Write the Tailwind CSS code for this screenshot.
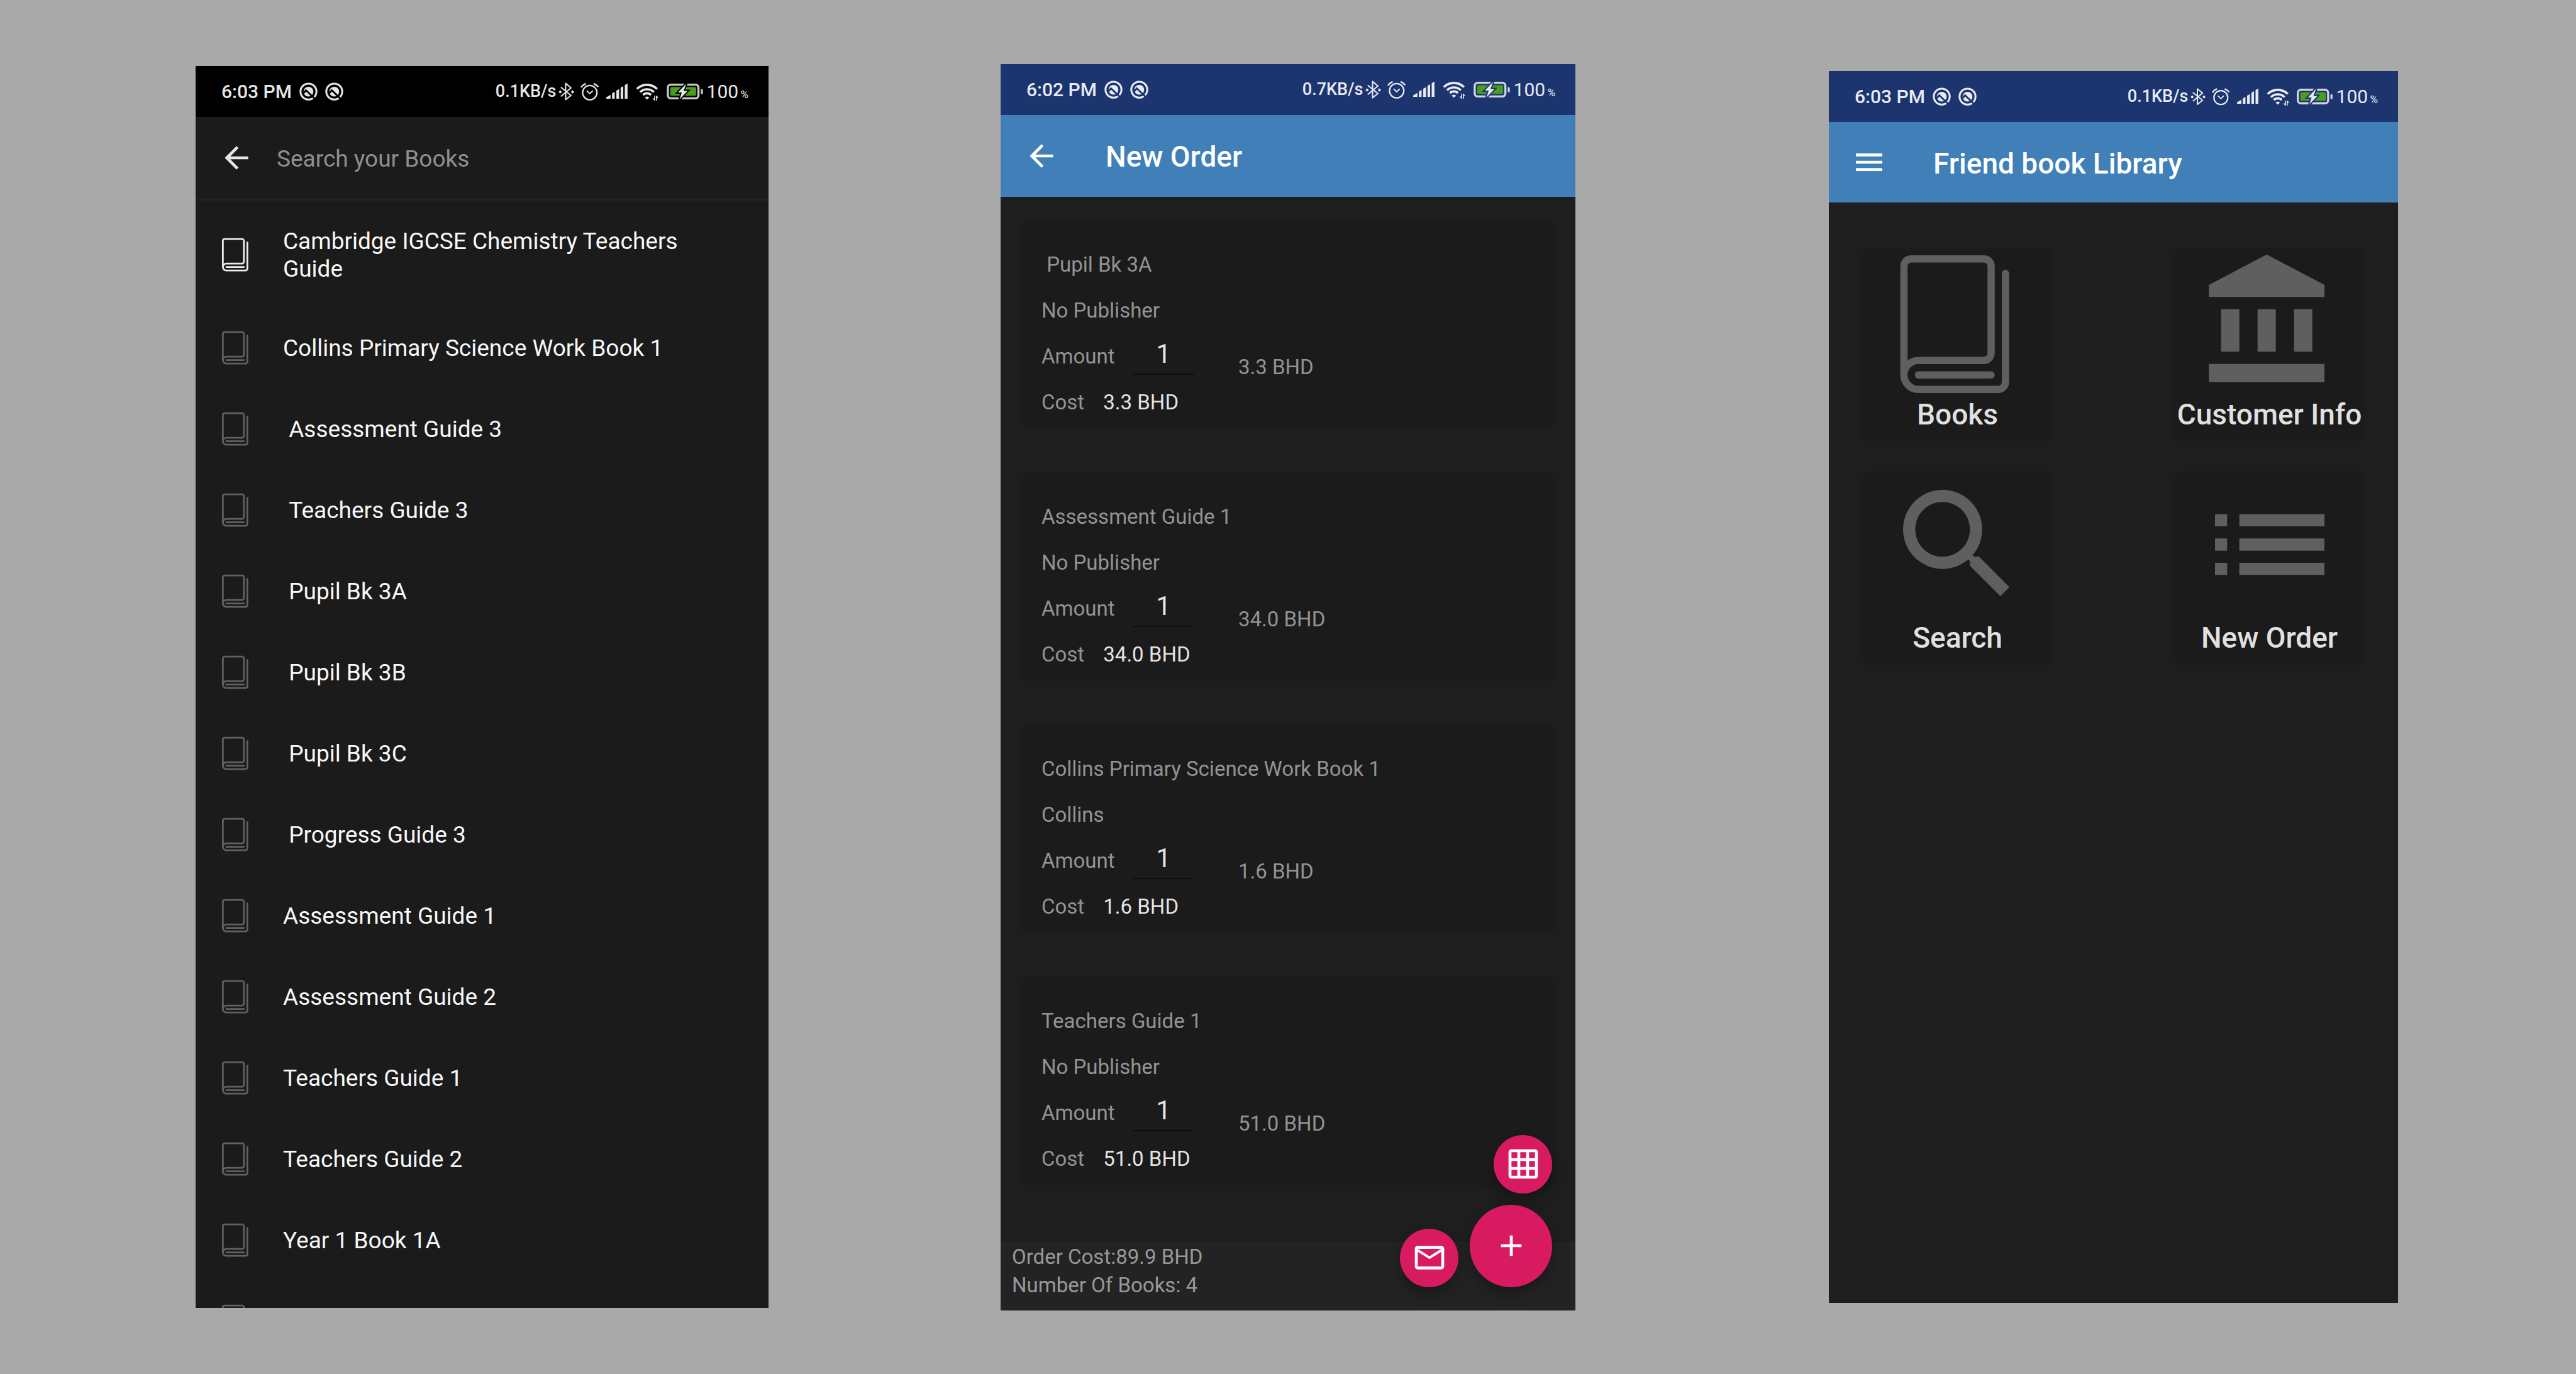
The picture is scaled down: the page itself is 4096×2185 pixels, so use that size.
<!DOCTYPE html>
<html lang="en">
<head>
<meta charset="utf-8">
<meta name="viewport" content="width=device-width, initial-scale=1">
<title>Friend book Library</title>
<script src="https://cdn.jsdelivr.net/npm/@tailwindcss/browser@4"></script>
</head>
<body class="bg-[#a9a9a9] font-['Roboto',sans-serif]">

<!-- Shared icon shapes -->
<svg class="absolute size-0" aria-hidden="true">
  <symbol id="i-assist" viewBox="710 46 152 153">
    <mask id="m-assist" maskUnits="userSpaceOnUse" x="700" y="36" width="180" height="180">
      <rect x="700" y="36" width="180" height="180" fill="#fff"/>
      <path d="M740 142L765 112L850 194" fill="none" stroke="#000" stroke-width="15"/>
    </mask>
    <g mask="url(#m-assist)">
      <circle cx="786" cy="123" r="67" fill="none" stroke="currentColor" stroke-width="16"/>
      <circle cx="786" cy="124" r="41" fill="currentColor"/>
    </g>
  </symbol>
  <symbol id="i-bt" viewBox="62 32 133 153">
    <path d="M86 75L168 142L123 178V40L168 78L86 147" fill="none" stroke="currentColor" stroke-width="11" stroke-linejoin="round" stroke-linecap="round"/>
    <path d="M77 98l14 14-14 14-14-14zM181 98l14 14-14 14-14-14z" fill="currentColor"/>
  </symbol>
  <symbol id="i-alarm" viewBox="245 32 155 153">
    <g fill="none" stroke="currentColor">
      <circle cx="324" cy="118" r="61" stroke-width="12"/>
      <path d="M298 102L324 127L350 102" stroke-width="10"/>
      <path d="M251 74Q262 54 290 41M358 41Q384 54 396 70" stroke-width="13"/>
    </g>
  </symbol>
  <symbol id="i-signal" viewBox="462 32 180 153">
    <path fill="currentColor" d="M462 170V158L498 136V170ZM511 170V124L533 111V170ZM547 170V101L570 88V170ZM583 170V77L605 64V170ZM618 170V54L641 41V170Z"/>
  </symbol>
  <symbol id="i-wifi" viewBox="710 32 192 153">
    <path d="M720 87A120 120 0 0 1 890 87M747 114A82 82 0 0 1 863 114M771 138A48 48 0 0 1 839 138" fill="none" stroke="currentColor" stroke-width="19"/>
    <path fill="currentColor" d="M786 160Q805 141 824 160L805 177ZM866 143h8v42h-8L852 167h14zM881 187v-42h8l13 18h-13v24z"/>
  </symbol>
  <symbol id="i-battery" viewBox="70 32 304 153">
    <mask id="m-bolt" maskUnits="userSpaceOnUse" x="60" y="20" width="330" height="180">
      <rect x="60" y="20" width="330" height="180" fill="#fff"/>
      <path d="M234 42L164 116H196L178 174L244 104H211Z" fill="#000" stroke="#000" stroke-width="22"/>
    </mask>
    <g mask="url(#m-bolt)">
      <rect x="79" y="51" width="257" height="115" rx="26" fill="none" stroke="currentColor" stroke-opacity=".88" stroke-width="18"/>
      <rect x="100" y="72" width="216" height="72" rx="10" fill="#4a9f1a"/>
    </g>
    <rect x="356" y="88" width="17" height="43" rx="8" fill="currentColor" fill-opacity=".88"/>
    <path d="M234 42L164 116H196L178 174L244 104H211Z" fill="currentColor"/>
  </symbol>
  <symbol id="i-book" viewBox="0 0 232 232">
    <g fill="none" stroke="currentColor" stroke-width="11.5" stroke-linecap="round">
      <path d="M191.8 39.7V212.8A11.5 11.5 0 0 1 180.3 224.3H53.4A23 23 0 0 1 30.4 201.3V28.3A11.5 11.5 0 0 1 41.9 16.8H157.5A11.5 11.5 0 0 1 169 28.3V166.7A11.5 11.5 0 0 1 157.5 178.2H53.4A23 23 0 0 0 30.4 201.3"/>
      <path d="M53.4 201.3H169"/>
    </g>
  </symbol>
  <symbol id="i-back" viewBox="0 0 24 24"><path fill="currentColor" d="M20 11H7.83l5.59-5.59L12 4l-8 8 8 8 1.41-1.41L7.83 13H20v-2z"/></symbol>
  <symbol id="i-menu" viewBox="0 0 24 24"><path fill="currentColor" d="M3 18h18v-2H3v2zm0-5h18v-2H3v2zm0-7v2h18V6H3z"/></symbol>
  <symbol id="i-bank" viewBox="0 0 24 24"><path fill="currentColor" d="M4 10v7h3v-7H4zm6 0v7h3v-7h-3zM2 22h19v-3H2v3zm14-12v7h3v-7h-3zm-4.500-9L2 6v2h19V6l-9.500-5z"/></symbol>
  <symbol id="i-search" viewBox="0 0 24 24"><path fill="currentColor" d="M15.500 14h-.79l-.28-.27A6.471 6.471 0 0 0 16 9.500 6.500 6.500 0 1 0 9.500 16c1.610 0 3.090-.59 4.230-1.570l.27.28v.79l5 4.990L20.490 19l-4.990-5zm-6 0C7.010 14 5 11.990 5 9.500S7.010 5 9.500 5 14 7.010 14 9.500 11.990 14 9.500 14z"/></symbol>
  <symbol id="i-list" viewBox="0 0 24 24"><path fill="currentColor" d="M3 13h2v-2H3v2zm0 4h2v-2H3v2zm0-8h2V7H3v2zm4 4h14v-2H7v2zm0 4h14v-2H7v2zM7 7v2h14V7H7z"/></symbol>
  <symbol id="i-grid" viewBox="0 0 24 24"><path fill="currentColor" d="M20 2H4c-1.100 0-2 .9-2 2v16c0 1.100.9 2 2 2h16c1.100 0 2-.9 2-2V4c0-1.100-.9-2-2-2zM8 20H4v-4h4v4zm0-6H4v-4h4v4zm0-6H4V4h4v4zm6 12h-4v-4h4v4zm0-6h-4v-4h4v4zm0-6h-4V4h4v4zm6 12h-4v-4h4v4zm0-6h-4v-4h4v4zm0-6h-4V4h4v4z"/></symbol>
  <symbol id="i-mail" viewBox="0 0 24 24"><path fill="currentColor" d="M22 6c0-1.100-.9-2-2-2H4c-1.100 0-2 .9-2 2v12c0 1.100.9 2 2 2h16c1.100 0 2-.9 2-2V6zm-2 0l-8 5-8-5h16zm0 12H4V8l8 5 8-5v10z"/></symbol>
  <symbol id="i-plus" viewBox="0 0 24 24"><path fill="currentColor" d="M19 13h-6v6h-2v-6H5v-2h6V5h2v6h6v2z"/></symbol>
</svg>

<main class="grid min-h-screen grid-cols-[311fr_911fr_369fr_914fr_403fr_905fr_283fr] items-center">

  <!-- Book search -->
  <section class="col-start-2 flex aspect-[911/1975] flex-col overflow-hidden bg-[#1b1b1b]">
    <div class="flex h-[81px] shrink-0 items-center justify-between bg-black pr-8 pl-[41px] text-[#e6e6e6]">
      <div class="flex items-center gap-3">
        <span class="text-[30px] font-medium">6:03 PM</span>
        <svg class="size-[29px]"><use href="#i-assist"/></svg>
        <svg class="size-[29px]"><use href="#i-assist"/></svg>
      </div>
      <div class="flex items-center">
        <span class="mr-[3px] text-[27px] font-medium">0.1KB/s</span>
        <svg class="mr-[10px] h-[29px] w-[25px]"><use href="#i-bt"/></svg>
        <svg class="mr-3 size-[29px]"><use href="#i-alarm"/></svg>
        <svg class="mr-[13px] h-[29px] w-[34px]"><use href="#i-signal"/></svg>
        <svg class="mr-[13px] h-[29px] w-9"><use href="#i-wifi"/></svg>
        <svg class="mr-[6px] h-[29px] w-[58px]"><use href="#i-battery"/></svg>
        <span class="text-[30px]">100 <span class="-ml-1 text-[17px]">%</span></span>
      </div>
    </div>
    <header class="flex h-[133px] shrink-0 items-center gap-9 border-b-[3px] border-[#232323] pr-9 pl-[37px]">
      <button type="button" aria-label="Back" class="text-[#e6e6e6]"><svg class="size-14"><use href="#i-back"/></svg></button>
      <input type="search" aria-label="Search your Books" placeholder="Search your Books" class="min-w-0 flex-1 bg-transparent pt-1 text-[37px] text-white outline-none placeholder:text-[#8f8f8f]">
    </header>
    <ul class="text-[37px] leading-[44px] text-[#f7f7f7] [&>li]:flex [&>li]:h-[129px] [&>li]:items-center [&>li]:gap-[47px] [&>li]:pr-16 [&>li]:pl-9 [&>li]:whitespace-pre-wrap [&_svg]:mb-1 [&_svg]:size-14 [&_svg]:shrink-0 [&_svg]:text-[#616161]">
      <li class="!h-[170px] pt-1"><svg class="!text-[#ececec]"><use href="#i-book"/></svg><span>Cambridge IGCSE Chemistry Teachers Guide</span></li>
      <li><svg><use href="#i-book"/></svg><span>Collins Primary Science Work Book 1</span></li>
      <li><svg><use href="#i-book"/></svg><span> Assessment Guide 3</span></li>
      <li><svg><use href="#i-book"/></svg><span> Teachers Guide 3</span></li>
      <li><svg><use href="#i-book"/></svg><span> Pupil Bk 3A</span></li>
      <li><svg><use href="#i-book"/></svg><span> Pupil Bk 3B</span></li>
      <li><svg><use href="#i-book"/></svg><span> Pupil Bk 3C</span></li>
      <li><svg><use href="#i-book"/></svg><span> Progress Guide 3</span></li>
      <li><svg><use href="#i-book"/></svg><span>Assessment Guide 1</span></li>
      <li><svg><use href="#i-book"/></svg><span>Assessment Guide 2</span></li>
      <li><svg><use href="#i-book"/></svg><span>Teachers Guide 1</span></li>
      <li><svg><use href="#i-book"/></svg><span>Teachers Guide 2</span></li>
      <li><svg><use href="#i-book"/></svg><span>Year 1 Book 1A</span></li>
      <li><svg><use href="#i-book"/></svg></li>
    </ul>
  </section>

  <!-- New order -->
  <section class="relative col-start-4 flex aspect-[914/1982] flex-col overflow-hidden bg-[#1e1e1e]">
    <div class="flex h-[81px] shrink-0 items-center justify-between bg-[#1c356f] pr-8 pl-[41px] text-[#e8ebf4]">
      <div class="flex items-center gap-3">
        <span class="text-[30px] font-medium">6:02 PM</span>
        <svg class="size-[29px]"><use href="#i-assist"/></svg>
        <svg class="size-[29px]"><use href="#i-assist"/></svg>
      </div>
      <div class="flex items-center">
        <span class="mr-[3px] text-[27px] font-medium">0.7KB/s</span>
        <svg class="mr-[10px] h-[29px] w-[25px]"><use href="#i-bt"/></svg>
        <svg class="mr-3 size-[29px]"><use href="#i-alarm"/></svg>
        <svg class="mr-[13px] h-[29px] w-[34px]"><use href="#i-signal"/></svg>
        <svg class="mr-[13px] h-[29px] w-9"><use href="#i-wifi"/></svg>
        <svg class="mr-[6px] h-[29px] w-[58px]"><use href="#i-battery"/></svg>
        <span class="text-[30px]">100 <span class="-ml-1 text-[17px]">%</span></span>
      </div>
    </div>
    <header class="flex h-[130px] shrink-0 items-center gap-[74px] bg-[#417fb8] px-[37px] text-white">
      <button type="button" aria-label="Back"><svg class="size-14"><use href="#i-back"/></svg></button>
      <h1 class="pt-1 text-[46px] font-medium">New Order</h1>
    </header>
    <div class="flex min-h-0 flex-1 flex-col gap-[74px] overflow-hidden px-9 pt-[37px] text-[33px] leading-[73px] text-[#939393] [&>article]:rounded-[9px] [&>article]:bg-[#1b1b1b] [&>article]:px-[29px] [&>article]:pt-[34px] [&>article]:pb-px [&>article]:shadow-[0_4px_8px_rgba(0,0,0,0.12)] [&_h2]:whitespace-pre [&_input]:mb-[7px] [&_input]:h-16 [&_input]:w-[98px] [&_input]:border-b-2 [&_input]:border-[#0e0e0e] [&_input]:bg-transparent [&_input]:text-center [&_input]:text-[42px] [&_input]:leading-[62px] [&_input]:text-[#e4e4e4] [&_label]:w-[145px] [&_output]:ml-[70px] [&_output]:leading-[38px]">
      <article>
        <h2> Pupil Bk 3A</h2>
        <p>No Publisher</p>
        <div class="flex items-end"><label for="amount-1">Amount</label><input id="amount-1" value="1"><output for="amount-1">3.3 BHD</output></div>
        <p>Cost <span class="ml-[22px] text-[#e4e4e4]">3.3 BHD</span></p>
      </article>
      <article>
        <h2>Assessment Guide 1</h2>
        <p>No Publisher</p>
        <div class="flex items-end"><label for="amount-2">Amount</label><input id="amount-2" value="1"><output for="amount-2">34.0 BHD</output></div>
        <p>Cost <span class="ml-[22px] text-[#e4e4e4]">34.0 BHD</span></p>
      </article>
      <article>
        <h2>Collins Primary Science Work Book 1</h2>
        <p>Collins</p>
        <div class="flex items-end"><label for="amount-3">Amount</label><input id="amount-3" value="1"><output for="amount-3">1.6 BHD</output></div>
        <p>Cost <span class="ml-[22px] text-[#e4e4e4]">1.6 BHD</span></p>
      </article>
      <article>
        <h2>Teachers Guide 1</h2>
        <p>No Publisher</p>
        <div class="flex items-end"><label for="amount-4">Amount</label><input id="amount-4" value="1"><output for="amount-4">51.0 BHD</output></div>
        <p>Cost <span class="ml-[22px] text-[#e4e4e4]">51.0 BHD</span></p>
      </article>
    </div>
    <footer class="h-[109px] shrink-0 bg-[#232323] px-[18px] pt-px text-[33px] leading-[45px] text-[#989898]">
      <p>Order Cost:89.9 BHD</p>
      <p>Number Of Books: 4</p>
    </footer>
    <!-- Floating action buttons -->
    <div class="absolute right-[37px] bottom-[37px] flex flex-col items-end gap-[18px] text-white [&_button]:flex [&_button]:items-center [&_button]:justify-center [&_button]:rounded-full [&_button]:bg-[#d81b60] [&_button]:shadow-[0_12px_20px_rgba(0,0,0,0.28)] [&_svg]:size-14">
      <button type="button" aria-label="Export table" class="size-[93px]"><svg><use href="#i-grid"/></svg></button>
      <div class="flex items-end gap-[18px]">
        <button type="button" aria-label="Send by mail" class="size-[93px]"><svg><use href="#i-mail"/></svg></button>
        <button type="button" aria-label="Add book" class="size-[131px]"><svg><use href="#i-plus"/></svg></button>
      </div>
    </div>
  </section>

  <!-- Home -->
  <section class="col-start-6 flex aspect-[905/1959] flex-col overflow-hidden bg-[#1e1e1e]">
    <div class="flex h-[81px] shrink-0 items-center justify-between bg-[#1c356f] pr-8 pl-[41px] text-[#e8ebf4]">
      <div class="flex items-center gap-3">
        <span class="text-[30px] font-medium">6:03 PM</span>
        <svg class="size-[29px]"><use href="#i-assist"/></svg>
        <svg class="size-[29px]"><use href="#i-assist"/></svg>
      </div>
      <div class="flex items-center">
        <span class="mr-[3px] text-[27px] font-medium">0.1KB/s</span>
        <svg class="mr-[10px] h-[29px] w-6"><use href="#i-bt"/></svg>
        <svg class="mr-3 h-[29px] w-7"><use href="#i-alarm"/></svg>
        <svg class="mr-[13px] h-[29px] w-[34px]"><use href="#i-signal"/></svg>
        <svg class="mr-3 h-[29px] w-9"><use href="#i-wifi"/></svg>
        <svg class="mr-[6px] h-[29px] w-[57px]"><use href="#i-battery"/></svg>
        <span class="text-[30px]">100 <span class="-ml-1 text-[17px]">%</span></span>
      </div>
    </div>
    <header class="flex h-32 shrink-0 items-center gap-[74px] bg-[#417fb8] px-9 text-white">
      <button type="button" aria-label="Menu"><svg class="size-14"><use href="#i-menu"/></svg></button>
      <h1 class="pt-1 text-[46px] font-medium">Friend book Library</h1>
    </header>
    <nav class="grid grid-cols-[301px_301px] justify-between gap-y-[54px] px-[54px] pt-[73px] text-[46px] leading-[64px] font-medium text-[#e0e0e0] [&>a]:flex [&>a]:h-[301px] [&>a]:flex-col [&>a]:items-center [&>a]:rounded-[9px] [&>a]:bg-[#1b1b1b] [&>a]:whitespace-nowrap [&>a]:shadow-[0_4px_8px_rgba(0,0,0,0.12)] [&_svg]:size-[232px] [&_svg]:shrink-0 [&_svg]:text-[#5f5f5f]">
      <a href="#books"><svg><use href="#i-book"/></svg>Books</a>
      <a href="#customer"><svg><use href="#i-bank"/></svg>Customer Info</a>
      <a href="#search"><svg><use href="#i-search"/></svg>Search</a>
      <a href="#order"><svg><use href="#i-list"/></svg>New Order</a>
    </nav>
  </section>
</main>
</body>
</html>
